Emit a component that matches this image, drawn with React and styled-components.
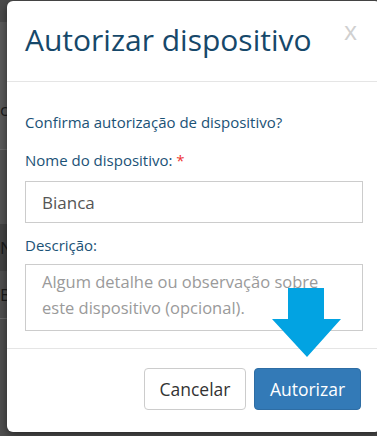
import React, { useState } from 'react';
import styled, { createGlobalStyle } from 'styled-components';

const GlobalStyle = createGlobalStyle`
  html, body {
    margin: 0;
    padding: 0;
    overflow: hidden;
    background-color: #4e4e4e;
    font-family: 'Open Sans', sans-serif;
  }
  * {
    box-sizing: border-box;
  }
`;

const Backdrop = styled.div`
  width: 377px;
  height: 436px;
  display: flex;
  flex-direction: column;
`;

const PageRow = styled.div`
  height: ${(p) => p.h}px;
  background-color: ${(p) => p.bg};
  border-bottom: ${(p) => (p.line ? '1px solid #6a6a6a' : 'none')};
  padding-top: ${(p) => p.pt || 0}px;
  font-size: 17px;
  line-height: ${(p) => (p.pt ? 24 : p.h)}px;
  color: #1a1a1a;
  white-space: nowrap;
  overflow: hidden;
`;

const PageText = styled.span`
  display: inline-block;
  margin-left: ${(p) => p.shift || 0}px;
`;

const Modal = styled.div`
  position: absolute;
  left: 7px;
  top: 1px;
  width: 374px;
  height: 431px;
  background-color: #fff;
  border-radius: 6px;
  box-shadow: 0 3px 9px rgba(0, 0, 0, 0.5);
  display: flex;
  flex-direction: column;
  font-family: 'Open Sans', sans-serif;
`;

const Header = styled.div`
  height: 81px;
  border-bottom: 1px solid #e5e5e5;
  display: flex;
  align-items: flex-start;
  justify-content: space-between;
  padding: 17px 24px 0 18px;
`;

const Title = styled.h4`
  margin: 0;
  font-size: 30px;
  font-weight: 400;
  line-height: 44px;
  color: #16486a;
`;

const Close = styled.button`
  background: none;
  border: none;
  padding: 0;
  margin-top: -3px;
  font-family: 'Open Sans', sans-serif;
  font-size: 25px;
  line-height: 30px;
  color: #d0d0d0;
  cursor: pointer;
`;

const Body = styled.div`
  padding: 28px 18px 0 18px;
  height: 267px;
  border-bottom: 1px solid #e5e5e5;
  display: flex;
  flex-direction: column;
`;

const Question = styled.p`
  margin: 0 0 14px 0;
  font-size: 15px;
  line-height: 24px;
  color: #1b5276;
`;

const Label = styled.label`
  display: block;
  margin-bottom: ${(p) => p.gap}px;
  font-size: 15px;
  line-height: 24px;
  color: #1b5276;
`;

const Required = styled.span`
  color: #e33;
`;

const Input = styled.input`
  display: block;
  width: 100%;
  height: 42px;
  padding: 0 16px;
  margin-bottom: 10px;
  border: 1px solid #ccc;
  border-radius: 0;
  font-family: 'Open Sans', sans-serif;
  font-size: 17px;
  color: #555;
  outline: none;
`;

const TextArea = styled.textarea`
  display: block;
  width: 100%;
  height: 67px;
  padding: 4px 16px;
  border: 1px solid #ccc;
  border-radius: 0;
  resize: none;
  font-family: 'Open Sans', sans-serif;
  font-size: 16.5px;
  line-height: 26px;
  color: #555;
  outline: none;
  overflow: hidden;

  &::placeholder {
    color: #9a9a9a;
  }
`;

const Footer = styled.div`
  flex: 1;
  display: flex;
  justify-content: flex-end;
  align-items: flex-start;
  gap: 8px;
  padding: 19px 20px 0 18px;
`;

const Button = styled.button`
  width: ${(p) => p.w}px;
  height: 42px;
  padding: 0;
  border-radius: 4px;
  border: 1px solid ${(p) => (p.primary ? '#2e6da4' : '#ccc')};
  background-color: ${(p) => (p.primary ? '#337ab7' : '#fff')};
  color: ${(p) => (p.primary ? '#fff' : '#333')};
  font-family: 'Open Sans', sans-serif;
  font-size: 17.5px;
  cursor: pointer;
`;

const Arrow = styled.svg`
  position: absolute;
  left: 272px;
  top: 288px;
`;

const App = () => {
  const [nome, setNome] = useState('Bianca');
  const [descricao, setDescricao] = useState('');

  return (
    <>
      <GlobalStyle />
      <Backdrop>
        <PageRow h={22} bg="#4b4b4b" />
        <PageRow h={128} bg="#5a5a5a" pt={76} line>
          <PageText shift={-6}>tc</PageText>
        </PageRow>
        <PageRow h={74} bg="#535353" />
        <PageRow h={47} bg="#434343">N</PageRow>
        <PageRow h={48} bg="#4f4f4f" line>Bi</PageRow>
        <PageRow h={117} bg="#4f4f4f" />
      </Backdrop>

      <Modal>
        <Header>
          <Title>Autorizar dispositivo</Title>
          <Close type="button">x</Close>
        </Header>
        <Body>
          <Question>Confirma autorização de dispositivo?</Question>
          <Label gap={9}>
            Nome do dispositivo: <Required>*</Required>
          </Label>
          <Input type="text" value={nome} onChange={(e) => setNome(e.target.value)} />
          <Label gap={7}>Descrição:</Label>
          <TextArea
            value={descricao}
            onChange={(e) => setDescricao(e.target.value)}
            placeholder="Algum detalhe ou observação sobre este dispositivo (opcional)."
          />
        </Body>
        <Footer>
          <Button type="button" w={102}>Cancelar</Button>
          <Button type="button" w={107} primary>Autorizar</Button>
        </Footer>
      </Modal>

      <Arrow width="70" height="70" viewBox="0 0 70 70">
        <path d="M16 0 H52 V31 H69 L35 69 L0 31 H16 Z" fill="#02a3e2" />
      </Arrow>
    </>
  );
};

export default App;
